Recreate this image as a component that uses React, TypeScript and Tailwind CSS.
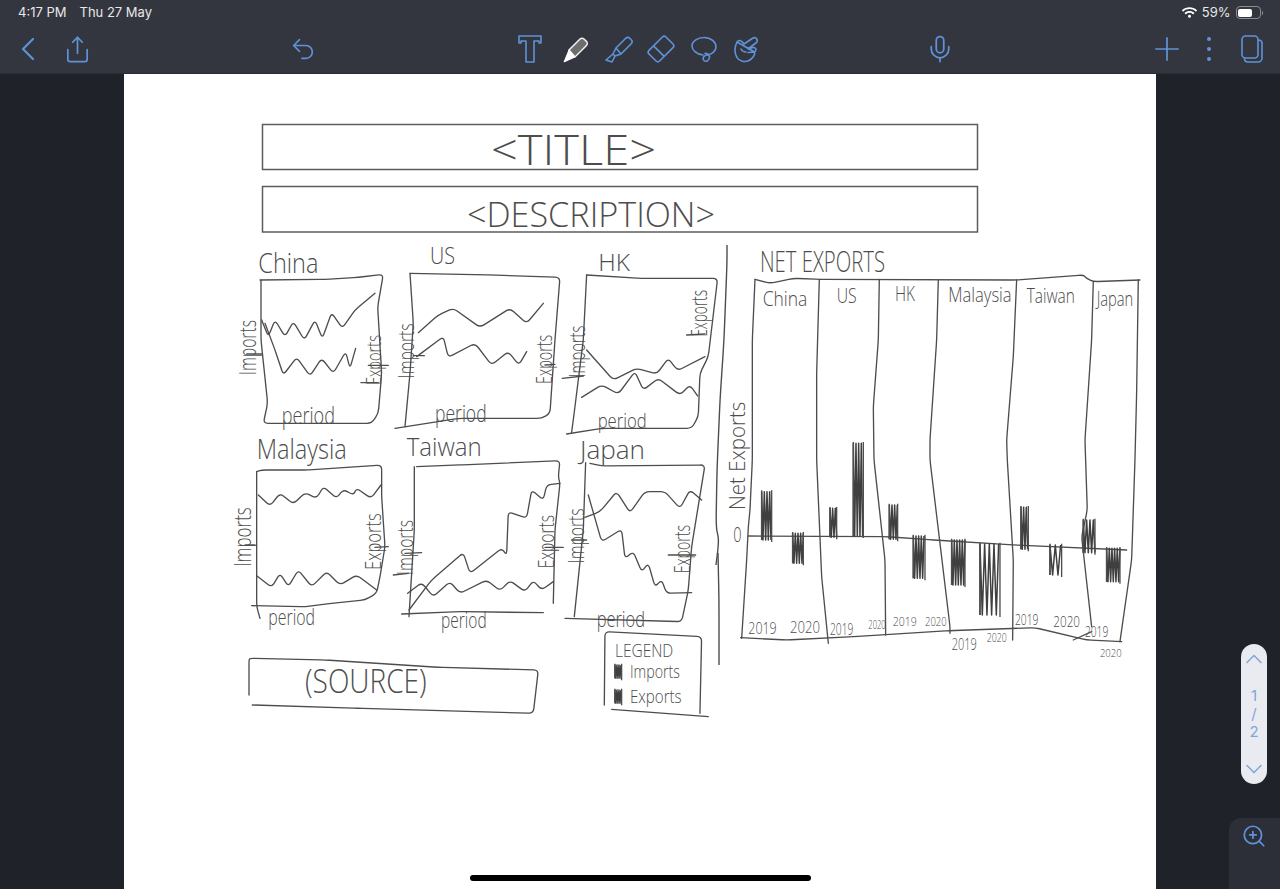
import { ChevronDown, ChevronLeft, ChevronUp, Mic, Plus, Share, Undo2, ZoomIn } from "lucide-react";
import { FaWifi } from "react-icons/fa";

const INK = "#4d4d4d";

// turn a flat list of x,y pairs into a hand-drawn stroke, corners only slightly eased
const stroke = (pts: number[]) => {
  let d = `M${pts[0]} ${pts[1]}`;
  for (let i = 2; i < pts.length - 2; i += 2) {
    const x = pts[i];
    const y = pts[i + 1];
    const toward = (px: number, py: number) => {
      const len = Math.hypot(px - x, py - y) || 1;
      const r = Math.min(14, len / 2.5);
      return `${x + ((px - x) / len) * r} ${y + ((py - y) / len) * r}`;
    };
    d += ` L${toward(pts[i - 2], pts[i - 1])} Q${x} ${y} ${toward(pts[i + 2], pts[i + 3])}`;
  }
  d += ` L${pts[pts.length - 2]} ${pts[pts.length - 1]}`;
  return d;
};

const Line = ({ p, w = 4 }: { p: number[]; w?: number }) => (
  <path d={stroke(p)} fill="none" stroke={INK} strokeWidth={w} strokeLinecap="round" strokeLinejoin="round" />
);

const Word = ({
  x,
  y,
  len,
  size,
  up,
  children,
}: {
  x: number;
  y: number;
  len: number;
  size: number;
  up?: boolean;
  children: string;
}) => (
  <text
    x={x}
    y={y}
    fontSize={size}
    textLength={len}
    lengthAdjust="spacingAndGlyphs"
    fill={INK}
    fontFamily="'Open Sans', 'Liberation Sans', sans-serif"
    fontWeight={300}
    transform={up ? `rotate(-90 ${x} ${y})` : undefined}
  >
    {children}
  </text>
);

// scribbled bar, x1-x2 wide and y1-y2 tall
const Bar = ({ x1, x2, y1, y2, step = 4 }: { x1: number; x2: number; y1: number; y2: number; step?: number }) => {
  let d = `M${x1} ${y2}`;
  let top = true;
  for (let x = x1; x <= x2; x += step) {
    d += ` L${x} ${top ? y1 : y2}`;
    top = !top;
  }
  return (
    <g>
      <path d={d} fill="none" stroke="#3f3f3f" strokeWidth={4.5} strokeLinejoin="round" />
      <path d={`M${x1} ${y2}V${y1 - 4}M${x2} ${y1 - 4}V${y2 + 6}`} fill="none" stroke={INK} strokeWidth={4} />
    </g>
  );
};

const SmallMultiplesTop = () => (
  <g transform="translate(225 240) scale(0.3333)">
    {/* China */}
    <Line p={[105, 120, 300, 118, 400, 112, 475, 103, 458, 200, 470, 400, 460, 520, 440, 550, 115, 550, 128, 490, 108, 300, 108, 120]} />
    <Line p={[110, 240, 130, 290, 150, 240, 180, 290, 205, 245, 238, 300, 270, 240, 292, 295, 320, 218, 352, 265, 390, 210, 450, 160]} />
    <Line p={[120, 250, 150, 330, 175, 405, 215, 352, 255, 408, 290, 355, 325, 400, 362, 335, 375, 385, 392, 325]} />
    <Line p={[65, 342, 110, 342]} />
    <Line p={[430, 376, 490, 376]} />
    <Line p={[408, 428, 460, 428]} />
    <Word x={100} y={100} len={180} size={80}>China</Word>
    <Word x={170} y={552} len={160} size={72}>period</Word>
    <Word x={94} y={405} len={165} size={72} up>Imports</Word>
    <Word x={468} y={435} len={150} size={62} up>Exports</Word>

    {/* US */}
    <Line p={[555, 100, 800, 105, 1005, 112, 990, 300, 975, 520, 950, 535, 700, 535, 510, 565]} />
    <Line p={[555, 100, 565, 250, 555, 400, 540, 560]} />
    <Line p={[580, 278, 640, 225, 685, 205, 765, 262, 855, 205, 905, 250, 955, 190]} />
    <Line p={[575, 350, 655, 290, 670, 352, 750, 310, 800, 375, 850, 335, 882, 375, 905, 335]} />
    <Line p={[565, 347, 598, 347]} />
    <Line p={[960, 375, 990, 373]} />
    <Word x={615} y={72} len={75} size={72}>US</Word>
    <Word x={630} y={545} len={155} size={72}>period</Word>
    <Word x={566} y={415} len={165} size={66} up>Imports</Word>
    <Word x={982} y={432} len={148} size={66} up>Exports</Word>

    {/* HK */}
    <Line p={[1085, 105, 1250, 115, 1478, 115, 1450, 350, 1425, 400, 1420, 530, 1400, 565, 1130, 565, 1025, 582]} />
    <Line p={[1085, 105, 1075, 300, 1050, 500, 1040, 578]} />
    <Line p={[1085, 330, 1165, 420, 1235, 385, 1295, 402, 1330, 355, 1358, 392, 1440, 350]} />
    <Line p={[1070, 472, 1130, 435, 1180, 462, 1230, 395, 1255, 450, 1300, 415, 1365, 465, 1395, 435, 1418, 468]} />
    <Line p={[1012, 415, 1075, 408]} />
    <Line p={[1385, 285, 1440, 282]} />
    <Word x={1120} y={92} len={95} size={72}>HK</Word>
    <Word x={1118} y={564} len={147} size={62}>period</Word>
    <Word x={1080} y={412} len={155} size={66} up>Imports</Word>
    <Word x={1446} y={290} len={140} size={66} up>Exports</Word>
  </g>
);

const SmallMultiplesBottom = () => (
  <g transform="translate(225 430) scale(0.3333)">
    {/* Malaysia */}
    <Line p={[95, 125, 110, 120, 250, 120, 470, 105, 470, 200, 480, 350, 465, 440, 455, 490, 420, 510, 320, 520, 240, 530, 80, 527]} />
    <Line p={[95, 125, 95, 530, 105, 565]} />
    <Line p={[100, 195, 135, 228, 165, 190, 205, 222, 240, 188, 275, 205, 295, 170, 335, 205, 355, 178, 385, 195, 395, 175, 438, 205, 468, 165]} />
    <Line p={[95, 437, 140, 472, 165, 430, 190, 470, 220, 420, 260, 470, 305, 425, 345, 465, 395, 435, 455, 480]} />
    <Line p={[60, 345, 90, 345]} />
    <Line p={[450, 352, 490, 350]} />
    <Word x={95} y={88} len={270} size={84}>Malaysia</Word>
    <Word x={130} y={585} len={140} size={68}>period</Word>
    <Word x={77} y={410} len={178} size={70} up>Imports</Word>
    <Word x={468} y={420} len={170} size={68} up>Exports</Word>

    {/* Taiwan */}
    <Line p={[575, 110, 700, 105, 1005, 92, 1000, 140, 1005, 160, 990, 300, 985, 520]} />
    <Line p={[568, 110, 568, 300, 552, 560]} />
    <Line p={[530, 552, 700, 545, 955, 548]} />
    <Line p={[552, 540, 620, 450, 715, 368, 735, 430, 830, 355, 845, 375, 850, 245, 905, 265, 920, 180, 955, 210, 965, 165, 1005, 160]} />
    <Line p={[548, 490, 590, 458, 625, 500, 675, 455, 705, 490, 785, 450, 825, 482, 855, 452, 900, 485, 925, 452, 950, 480, 985, 455]} />
    <Line p={[505, 435, 550, 430]} />
    <Line p={[540, 370, 590, 368]} />
    <Line p={[960, 352, 1015, 352]} />
    <Word x={545} y={78} len={225} size={78}>Taiwan</Word>
    <Word x={648} y={595} len={137} size={68}>period</Word>
    <Word x={563} y={435} len={165} size={66} up>Imports</Word>
    <Word x={986} y={415} len={160} size={66} up>Exports</Word>

    {/* Japan */}
    <Line p={[1095, 100, 1130, 108, 1440, 105, 1400, 350, 1390, 480, 1370, 575, 1020, 565]} />
    <Line p={[1082, 98, 1075, 300, 1048, 560]} />
    <Line p={[1080, 262, 1125, 245, 1175, 185, 1215, 248, 1260, 185, 1320, 185, 1365, 235, 1395, 180, 1430, 210]} />
    <Line p={[1090, 195, 1130, 335, 1190, 298, 1200, 385, 1225, 365, 1250, 425, 1270, 400, 1290, 470, 1310, 450, 1325, 490, 1400, 488]} />
    <Line p={[1040, 330, 1085, 330]} />
    <Line p={[1330, 375, 1412, 375]} />
    <Word x={1065} y={88} len={195} size={78}>Japan</Word>
    <Word x={1115} y={592} len={145} size={66}>period</Word>
    <Word x={1078} y={400} len={165} size={66} up>Imports</Word>
    <Word x={1394} y={430} len={145} size={66} up>Exports</Word>

    {/* source + legend */}
    <Line p={[72, 795, 72, 690, 75, 685, 300, 690, 640, 712, 940, 720, 925, 850, 400, 835, 82, 825]} />
    <Word x={240} y={790} len={365} size={100}>(SOURCE)</Word>
    <Line p={[1138, 825, 1140, 605, 1430, 620, 1425, 850]} />
    <Line p={[1160, 838, 1450, 860]} />
    <Word x={1170} y={680} len={175} size={56}>LEGEND</Word>
    <Word x={1215} y={745} len={150} size={54}>Imports</Word>
    <Word x={1215} y={820} len={155} size={54}>Exports</Word>
    <Bar x1={1170} x2={1190} y1={705} y2={745} step={3} />
    <Bar x1={1170} x2={1190} y1={780} y2={820} step={3} />
  </g>
);

const NetExports = () => (
  <>
    <g transform="translate(720 240) scale(0.3333)">
      <Line p={[105, 118, 150, 130, 220, 115, 300, 118, 890, 120, 1090, 105, 1100, 115, 1120, 125, 1260, 120]} />
      <Word x={120} y={95} len={375} size={88}>NET EXPORTS</Word>
      <Word x={128} y={198} len={134} size={62}>China</Word>
      <Word x={350} y={190} len={60} size={62}>US</Word>
      <Word x={525} y={183} len={60} size={62}>HK</Word>
      <Word x={685} y={187} len={190} size={62}>Malaysia</Word>
      <Word x={920} y={190} len={145} size={62}>Taiwan</Word>
      <Word x={1130} y={198} len={110} size={62}>Japan</Word>
      <Word x={76} y={810} len={325} size={66} up>Net Exports</Word>
      <Line p={[105, 118, 97, 300, 97, 660, 90, 810, 85, 860, 80, 960, 65, 1195]} />
      <Line p={[298, 118, 290, 400, 290, 660, 305, 1010, 325, 1210]} />
      <Line p={[478, 118, 475, 300, 460, 500, 462, 660, 495, 960, 497, 1185]} />
      <Line p={[655, 120, 650, 300, 630, 600, 630, 660, 690, 1160, 690, 1180]} />
      <Line p={[890, 120, 880, 350, 860, 600, 862, 660, 880, 960, 878, 1200]} />
      <Line p={[1120, 125, 1115, 300, 1095, 600, 1097, 660, 1102, 810, 1085, 890, 1115, 1160]} />
      <Line p={[1255, 120, 1250, 460, 1245, 660, 1235, 960, 1200, 1205]} />
    </g>
    <g transform="translate(720 460) scale(0.3333)">
      <Line p={[85, 228, 500, 230, 640, 240, 880, 255, 1220, 270]} />
      <Line p={[62, 533, 200, 540, 400, 530, 690, 512, 945, 503, 1100, 540, 1205, 545]} />
      <Line p={[1060, 540, 1115, 515]} />
      <Bar x1={125} x2={155} y1={95} y2={240} />
      <Bar x1={218} x2={250} y1={220} y2={310} />
      <Bar x1={330} x2={350} y1={145} y2={232} />
      <Bar x1={400} x2={430} y1={-50} y2={228} />
      <Bar x1={508} x2={533} y1={135} y2={238} />
      <Bar x1={580} x2={615} y1={228} y2={355} />
      <Bar x1={695} x2={735} y1={240} y2={375} />
      <Bar x1={780} x2={840} y1={252} y2={465} step={7} />
      <Bar x1={903} x2={925} y1={142} y2={268} />
      <Bar x1={990} x2={1025} y1={255} y2={345} step={8} />
      <Bar x1={1090} x2={1125} y1={180} y2={278} step={5} />
      <Bar x1={1160} x2={1200} y1={265} y2={365} />
      <Word x={40} y={245} len={25} size={62}>0</Word>
      <Word x={85} y={522} len={85} size={50}>2019</Word>
      <Word x={210} y={518} len={90} size={50}>2020</Word>
      <Word x={330} y={525} len={70} size={50}>2019</Word>
      <Word x={445} y={508} len={52} size={36}>2020</Word>
      <Word x={518} y={497} len={72} size={40}>2019</Word>
      <Word x={615} y={497} len={65} size={40}>2020</Word>
      <Word x={695} y={570} len={75} size={50}>2019</Word>
      <Word x={800} y={545} len={60} size={40}>2020</Word>
      <Word x={885} y={495} len={70} size={46}>2019</Word>
      <Word x={1000} y={500} len={80} size={46}>2020</Word>
      <Word x={1095} y={530} len={70} size={42}>2019</Word>
      <Word x={1140} y={590} len={65} size={34}>2020</Word>
    </g>
  </>
);

const Sketch = () => (
  <svg viewBox="124 74 1032 815" className="block w-[1032px] h-[815px]">
    <rect x={262.5} y={124.5} width={715} height={45} fill="none" stroke="#5c5c5c" strokeWidth={1.5} />
    <rect x={262.5} y={186.5} width={715} height={45.5} fill="none" stroke="#5c5c5c" strokeWidth={1.5} />
    <Word x={491} y={165} len={165} size={42}>{"<TITLE>"}</Word>
    <Word x={467} y={227} len={248} size={34}>{"<DESCRIPTION>"}</Word>
    {/* divider between small multiples and net exports */}
    <path d={stroke([727, 245, 727, 263, 724, 340, 720, 400, 717, 470, 716, 527, 719, 540, 716, 565])} fill="none" stroke={INK} strokeWidth={1.4} />
    <path d={stroke([718, 553, 719, 600, 719, 665])} fill="none" stroke={INK} strokeWidth={1.4} />
    <SmallMultiplesTop />
    <SmallMultiplesBottom />
    <NetExports />
  </svg>
);

const blue = "#5f93d8";

const TextTool = () => (
  <svg width="28" height="28" viewBox="0 0 28 28" fill="none" stroke={blue} strokeWidth="1.6" strokeLinejoin="round">
    <path d="M3 1H25V8H23V6H18V27H10V6H5V8H3Z" />
  </svg>
);

const PenTool = () => (
  <svg width="28" height="28" viewBox="0 0 28 28">
    <path d="M8 15L19 4Q21 2.5 23 4L26 7Q27 9 25.5 10.5L14 22Z" fill="#6e6e6e" stroke="#f2f2f2" strokeWidth="1.5" />
    <path d="M8 15L14 22L3 27Z" fill="#ffffff" stroke="#ffffff" strokeWidth="1" strokeLinejoin="round" />
  </svg>
);

const HighlighterTool = () => (
  <svg width="28" height="28" viewBox="0 0 28 28" fill="none" stroke={blue} strokeWidth="1.6" strokeLinejoin="round">
    <path d="M11 13L21 3Q23 1.5 25 3.5L26.5 5Q28 7 26 9L16 19Z" />
    <path d="M11 13L8 19L10 21L16 19" />
    <path d="M8 19L1 25L7 27L10 21" />
  </svg>
);

const EraserTool = () => (
  <svg width="28" height="28" viewBox="0 0 28 28" fill="none" stroke={blue} strokeWidth="1.6">
    <g transform="rotate(-45 14 14)">
      <rect x="2" y="6.5" width="24" height="15" rx="2.5" />
      <line x1="11" y1="6.5" x2="11" y2="21.5" />
    </g>
  </svg>
);

const LassoTool = () => (
  <svg width="28" height="28" viewBox="0 0 28 28" fill="none" stroke={blue} strokeWidth="1.6" strokeLinecap="round">
    <path d="M13 20C6 19 2 15 2 11C2 6 8 2.5 14 2.5C21 2.5 26 7 26 12C26 16 22 19 18 20C14 20 12 23 14 25.5C16 27.5 20 25 19.5 21.5C19 19.5 17 18 15 18.5" />
  </svg>
);

const HandTool = () => (
  <svg width="28" height="28" viewBox="0 0 28 28" fill="none" stroke={blue} strokeWidth="1.6" strokeLinecap="round" strokeLinejoin="round">
    <path d="M6 7C3.5 12 3.5 18 6 22.5C8 26.5 14 27.5 18 25.5C21 24 24.5 20 23.5 17L17 17.5M23.5 17C26 15 25 12 22 12.5L17 14L25.5 7.5C27.5 5 25 1.5 22 3L13 9C11 6 8 4 6 7Z" />
    <path d="M10 14C11 16 13 17 15 17" />
  </svg>
);

const PagesTool = () => (
  <svg width="28" height="28" viewBox="0 0 28 28" fill="none" stroke={blue} strokeWidth="1.6">
    <rect x="6" y="1" width="16" height="22" rx="3.5" />
    <path d="M22 5C24.5 5 26 6.5 26 8V23C26 25 24.5 27 22 27H12C10 27 8.5 25.5 8.5 23.5" />
  </svg>
);

const Battery = () => (
  <div className="flex items-center">
    <div className="w-[25px] h-[13px] rounded-[4px] border border-[#8a8c90] p-[1.5px]">
      <div className="h-full w-[14px] rounded-[2px] bg-white" />
    </div>
    <div className="ml-[1px] w-[1.5px] h-[4px] rounded-r bg-[#8a8c90]" />
  </div>
);

const Cell = ({ children }: { children: React.ReactNode }) => (
  <div className="w-[28px] h-[28px] flex items-center justify-center shrink-0">{children}</div>
);

export default function App() {
  return (
    <div className="relative w-[1280px] h-[889px] overflow-hidden flex flex-col bg-[#1f2229] font-['Inter','Liberation_Sans',sans-serif]">
      <header className="h-[74px] shrink-0 bg-[#33363e] border-b border-[#2a2c33]">
        <div className="h-[25px] flex items-center pl-[18px] pr-[17px] text-[13px] text-[#e8e8e8]">
          <span>4:17 PM</span>
          <span className="ml-[13px]">Thu 27 May</span>
          <div className="ml-auto flex items-center gap-[5px]">
            <FaWifi className="text-white" size={15} />
            <span>59%</span>
            <Battery />
          </div>
        </div>
        <div className="h-[48px] flex items-center pl-[14px] text-[#5f93d8]">
          <Cell><ChevronLeft className="shrink-0" size={40} strokeWidth={1.3} /></Cell>
          <div className="ml-[21px]"><Cell><Share className="shrink-0" size={29} strokeWidth={1.4} /></Cell></div>
          <div className="ml-[198px]"><Cell><Undo2 className="shrink-0" size={28} strokeWidth={1.4} /></Cell></div>
          <div className="ml-[199px]"><Cell><TextTool /></Cell></div>
          <div className="ml-[17px]"><Cell><PenTool /></Cell></div>
          <div className="ml-[16px]"><Cell><HighlighterTool /></Cell></div>
          <div className="ml-[14px]"><Cell><EraserTool /></Cell></div>
          <div className="ml-[15px]"><Cell><LassoTool /></Cell></div>
          <div className="ml-[13px]"><Cell><HandTool /></Cell></div>
          <div className="ml-[167px]"><Cell><Mic className="shrink-0" size={30} strokeWidth={1.4} /></Cell></div>
          <div className="ml-[199px]"><Cell><Plus className="shrink-0" size={38} strokeWidth={1.1} /></Cell></div>
          <div className="ml-[14px]">
            <Cell>
              <div className="flex flex-col gap-[6px]">
                <span className="block w-[4px] h-[4px] rounded-full bg-[#5f93d8]" />
                <span className="block w-[4px] h-[4px] rounded-full bg-[#5f93d8]" />
                <span className="block w-[4px] h-[4px] rounded-full bg-[#5f93d8]" />
              </div>
            </Cell>
          </div>
          <div className="ml-[13px]"><Cell><PagesTool /></Cell></div>
        </div>
      </header>

      <main className="flex flex-1 min-h-0">
        <div className="w-[124px] shrink-0" />
        <div className="w-[1032px] shrink-0 bg-white">
          <Sketch />
        </div>
        <aside className="w-[124px] shrink-0 flex flex-col items-end">
          <div className="mt-[570px] mr-[13px] w-[26px] h-[140px] rounded-full bg-[#e9ebf0] flex flex-col items-center justify-between py-[1px] text-[#7fa6dc]">
            <ChevronUp size={28} strokeWidth={1.3} />
            <div className="flex flex-col items-center text-[15px] leading-[18px]">
              <span>1</span>
              <span>/</span>
              <span>2</span>
            </div>
            <ChevronDown size={28} strokeWidth={1.3} />
          </div>
          <div className="mt-auto w-[51px] h-[71px] rounded-tl-xl bg-[#2c2f37] pl-[12px] pt-[5px] text-[#5f93d8]">
            <ZoomIn size={26} strokeWidth={1.6} />
          </div>
        </aside>
      </main>

      <div className="absolute left-[470px] top-[875px] w-[341px] h-[6px] rounded-full bg-black" />
    </div>
  );
}
